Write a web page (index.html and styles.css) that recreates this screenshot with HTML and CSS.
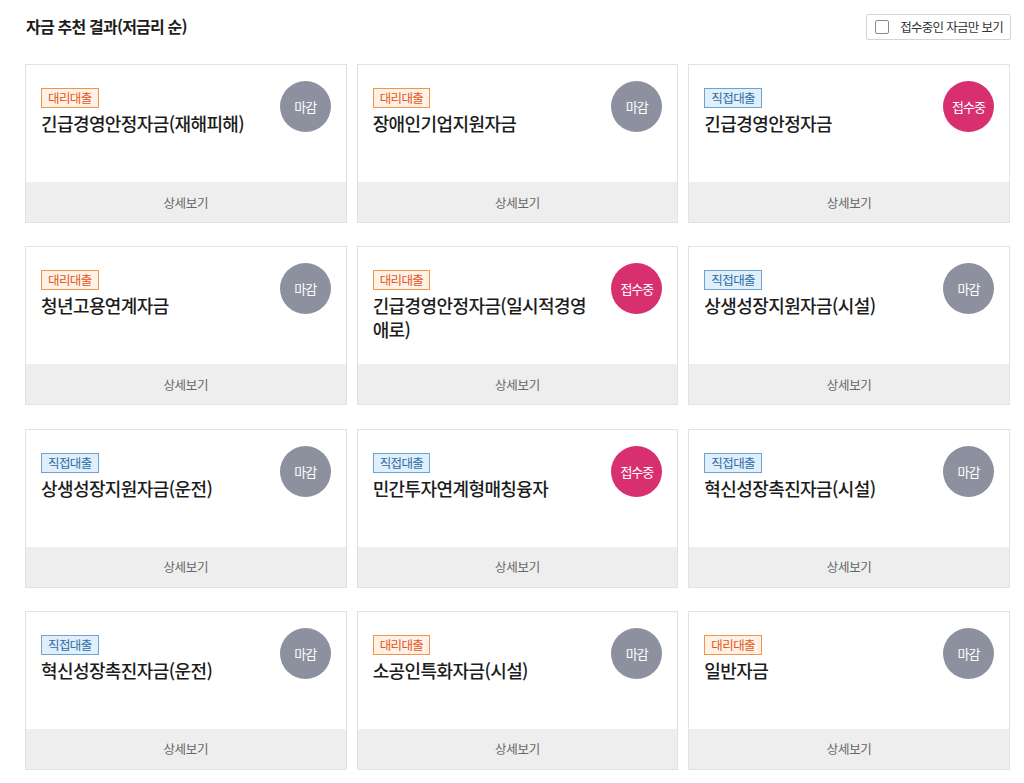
FILE: index.html
```html
<!DOCTYPE html>
<html lang="ko">
<head>
<meta charset="utf-8">
<title>자금 추천 결과</title>
<link rel="stylesheet" href="styles.css">
</head>
<body>
<div class="page">
  <div class="header">
    <h2 class="heading">자금 추천 결과(저금리 순)</h2>
    <label class="filter"><span class="box"></span><span class="filter-text">접수중인 자금만 보기</span></label>
  </div>
  <div class="grid">
    <div class="card"><div class="body"><div class="info"><span class="tag orange">대리대출</span><div class="title">긴급경영안정자금(재해피해)</div></div><span class="status closed">마감</span></div><div class="foot">상세보기</div></div>
    <div class="card"><div class="body"><div class="info"><span class="tag orange">대리대출</span><div class="title">장애인기업지원자금</div></div><span class="status closed">마감</span></div><div class="foot">상세보기</div></div>
    <div class="card"><div class="body"><div class="info"><span class="tag blue">직접대출</span><div class="title">긴급경영안정자금</div></div><span class="status open">접수중</span></div><div class="foot">상세보기</div></div>

    <div class="card"><div class="body"><div class="info"><span class="tag orange">대리대출</span><div class="title">청년고용연계자금</div></div><span class="status closed">마감</span></div><div class="foot">상세보기</div></div>
    <div class="card"><div class="body"><div class="info"><span class="tag orange">대리대출</span><div class="title">긴급경영안정자금(일시적경영 애로)</div></div><span class="status open">접수중</span></div><div class="foot">상세보기</div></div>
    <div class="card"><div class="body"><div class="info"><span class="tag blue">직접대출</span><div class="title">상생성장지원자금(시설)</div></div><span class="status closed">마감</span></div><div class="foot">상세보기</div></div>

    <div class="card"><div class="body"><div class="info"><span class="tag blue">직접대출</span><div class="title">상생성장지원자금(운전)</div></div><span class="status closed">마감</span></div><div class="foot">상세보기</div></div>
    <div class="card"><div class="body"><div class="info"><span class="tag blue">직접대출</span><div class="title">민간투자연계형매칭융자</div></div><span class="status open">접수중</span></div><div class="foot">상세보기</div></div>
    <div class="card"><div class="body"><div class="info"><span class="tag blue">직접대출</span><div class="title">혁신성장촉진자금(시설)</div></div><span class="status closed">마감</span></div><div class="foot">상세보기</div></div>

    <div class="card"><div class="body"><div class="info"><span class="tag blue">직접대출</span><div class="title">혁신성장촉진자금(운전)</div></div><span class="status closed">마감</span></div><div class="foot">상세보기</div></div>
    <div class="card"><div class="body"><div class="info"><span class="tag orange">대리대출</span><div class="title">소공인특화자금(시설)</div></div><span class="status closed">마감</span></div><div class="foot">상세보기</div></div>
    <div class="card"><div class="body"><div class="info"><span class="tag orange">대리대출</span><div class="title">일반자금</div></div><span class="status closed">마감</span></div><div class="foot">상세보기</div></div>
  </div>
</div>
</body>
</html>
```
FILE: styles.css
```css
* { box-sizing: border-box; }
html, body { margin: 0; padding: 0; background: #fff; }
body {
  font-family: "Noto Sans CJK KR", "Noto Sans", sans-serif;
  color: #222;
}
.page {
  width: 986px;
  margin-left: 25px;
}
.header {
  display: flex;
  align-items: center;
  justify-content: space-between;
  height: 26px;
  margin-top: 14px;
  margin-bottom: 24px;
}
.heading {
  margin: 0 0 0 1px;
  font-size: 16px;
  font-weight: 700;
  letter-spacing: -0.8px;
  color: #1e1e1e;
  line-height: 20px;
  position: relative;
  top: -1px;
}
.filter {
  display: flex;
  align-items: center;
  height: 26px;
  padding: 0 7px 0 8px;
  border: 1px solid #d4d4d4;
  border-radius: 2px;
  background: #fff;
}
.box {
  width: 14px;
  height: 14px;
  border: 1px solid #8a8a8a;
  border-radius: 2px;
  background: #fff;
  margin-right: 11px;
}
.filter-text {
  font-size: 12.5px;
  letter-spacing: -0.7px;
  color: #333;
  line-height: 16px;
}
.grid {
  display: grid;
  grid-template-columns: repeat(3, 1fr);
  column-gap: 10px;
  row-gap: 23.3px;
  width: 985px;
}
.card {
  height: 159px;
  border: 1px solid #e2e2e2;
  display: flex;
  flex-direction: column;
  background: #fff;
}
.body {
  flex: 1;
  display: flex;
  justify-content: space-between;
  align-items: flex-start;
  padding: 16px 15px 0 15px;
}
.info {
  display: flex;
  flex-direction: column;
  align-items: flex-start;
  max-width: 218px;
  padding-top: 7px;
}
.tag {
  display: block;
  height: 20px;
  line-height: 18px;
  padding: 0 6px;
  font-size: 12.5px;
  letter-spacing: -0.6px;
  border: 1px solid;
}
.tag.orange {
  color: #e2561a;
  background: #fff1e6;
  border-color: #f0954a;
}
.tag.blue {
  color: #2b6ea6;
  background: #e0effa;
  border-color: #6ba3d3;
}
.title {
  margin-top: 3px;
  font-size: 18px;
  line-height: 24px;
  letter-spacing: -0.6px;
  font-weight: 500;
  color: #1c1c1c;
}
.status {
  flex: none;
  width: 51px;
  height: 51px;
  border-radius: 50%;
  display: flex;
  align-items: center;
  justify-content: center;
  color: #fff;
  font-size: 13px;
  letter-spacing: -1px;
}
.status.closed { background: #8d909e; }
.status.open { background: #d8306f; }
.foot {
  height: 40px;
  background: #eeeeee;
  display: flex;
  align-items: center;
  justify-content: center;
  font-size: 12.5px;
  letter-spacing: -0.3px;
  color: #666;
}
```
